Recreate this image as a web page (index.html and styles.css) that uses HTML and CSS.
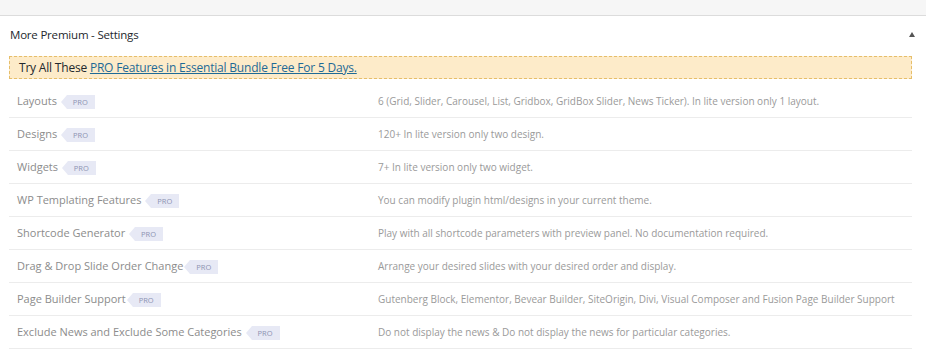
FILE: index.html
```html
<!DOCTYPE html>
<html lang="en">
<head>
  <meta charset="UTF-8">
  <title>More Premium - Settings</title>
  <link rel="stylesheet" href="styles.css">
</head>
<body>
  <div class="topbar"></div>

  <div class="postbox">
    <div class="postbox-header">
      <h2>More Premium - Settings</h2>
      <span class="toggle-arrow"></span>
    </div>

    <div class="inside">
      <div class="bundle-notice">
        Try All These <a href="#">PRO Features in Essential Bundle Free For 5 Days.</a>
      </div>

      <div class="feature-list">
        <div class="feature-row">
          <div class="feature-name">Layouts <span class="pro-tag">PRO</span></div>
          <div class="feature-desc">6 (Grid, Slider, Carousel, List, Gridbox, GridBox Slider, News Ticker). In lite version only 1 layout.</div>
        </div>
        <div class="feature-row">
          <div class="feature-name">Designs <span class="pro-tag">PRO</span></div>
          <div class="feature-desc">120+ In lite version only two design.</div>
        </div>
        <div class="feature-row">
          <div class="feature-name">Widgets <span class="pro-tag">PRO</span></div>
          <div class="feature-desc">7+ In lite version only two widget.</div>
        </div>
        <div class="feature-row">
          <div class="feature-name">WP Templating Features <span class="pro-tag">PRO</span></div>
          <div class="feature-desc">You can modify plugin html/designs in your current theme.</div>
        </div>
        <div class="feature-row">
          <div class="feature-name">Shortcode Generator <span class="pro-tag">PRO</span></div>
          <div class="feature-desc">Play with all shortcode parameters with preview panel. No documentation required.</div>
        </div>
        <div class="feature-row">
          <div class="feature-name">Drag &amp; Drop Slide Order Change<span class="pro-tag">PRO</span></div>
          <div class="feature-desc">Arrange your desired slides with your desired order and display.</div>
        </div>
        <div class="feature-row">
          <div class="feature-name">Page Builder Support<span class="pro-tag">PRO</span></div>
          <div class="feature-desc">Gutenberg Block, Elementor, Bevear Builder, SiteOrigin, Divi, Visual Composer and Fusion Page Builder Support</div>
        </div>
        <div class="feature-row">
          <div class="feature-name">Exclude News and Exclude Some Categories <span class="pro-tag">PRO</span></div>
          <div class="feature-desc">Do not display the news &amp; Do not display the news for particular categories.</div>
        </div>
      </div>
    </div>
  </div>
</body>
</html>
```

FILE: styles.css
```css
body {
  font-family: "Open Sans", "Noto Sans", Arial, sans-serif;
  background-color: #fff;
  color: #23282d;
  margin: 0;
}

.topbar {
  height: 15px;
  background-color: #f6f6f6;
  border-bottom: 1px solid #dcdcdc;
}

.postbox {
  background: #fff;
  padding: 0 14px 0 9px;
}

.postbox-header {
  display: flex;
  justify-content: space-between;
  align-items: center;
  height: 36px;
}

.postbox-header h2 {
  margin: 0 0 0 1px;
  font-size: 11.5px;
  letter-spacing: -0.2px;
  font-weight: normal;
  color: #23282d;
}

.toggle-arrow {
  width: 0;
  height: 0;
  margin-right: -3px;
  border-left: 3px solid transparent;
  border-right: 3px solid transparent;
  border-bottom: 5px solid #555;
}

.inside {
  padding-top: 4px;
}

.bundle-notice {
  background-color: #fdebc9;
  border: 1px dashed #e6be6a;
  padding: 3px 9px;
  font-size: 12px;
  letter-spacing: -0.2px;
  line-height: 15px;
}

.bundle-notice a {
  color: #1f6a96;
}

.feature-list {
  margin-top: 6px;
}

.feature-row {
  display: grid;
  grid-template-columns: 369px 1fr;
  align-items: center;
  height: 32px;
  border-bottom: 1px solid #ececec;
}

.feature-name {
  padding-left: 8px;
  font-size: 11px;
  color: #8c8c8c;
  white-space: nowrap;
}

.feature-desc {
  font-size: 10px;
  color: #9a9a9a;
  white-space: nowrap;
}

.pro-tag {
  position: relative;
  display: inline-block;
  vertical-align: middle;
  margin-left: 7px;
  padding: 0 7px 0 6px;
  height: 14px;
  line-height: 14px;
  font-size: 7.5px;
  letter-spacing: 0;
  color: #8d93b2;
  background-color: #e7e9f5;
}

.pro-tag::before {
  content: "";
  position: absolute;
  left: -6px;
  top: 0;
  border-top: 7px solid transparent;
  border-bottom: 7px solid transparent;
  border-right: 6px solid #e7e9f5;
}
```
